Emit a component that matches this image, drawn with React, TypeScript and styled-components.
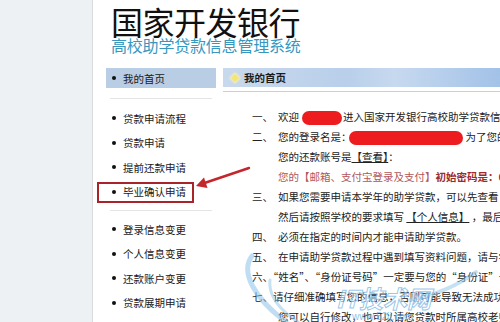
import React from "react"
import styled, {createGlobalStyle} from "styled-components"

const GlobalStyle = createGlobalStyle`
  html, body {
    margin: 0;
    padding: 0;
    background: #ffffff;
  }
  body {
    font-family: "Noto Sans CJK SC", "Liberation Sans", sans-serif;
    color: #222;
  }
`

const Page = styled.div`
  position: relative;
  display: flex;
  width: 500px;
  height: 322px;
  overflow: hidden;
`

const Gutter = styled.div`
  width: 92px;
  flex-shrink: 0;
  background-color: #eef1f3;
  border-right: 1px solid #d8dcdf;
`

const Main = styled.div`
  flex: 1;
  min-width: 0;
  display: flex;
  flex-direction: column;
  background: #fff;
`

const Brand = styled.div`
  padding: 5px 0 0 18px;
`

const Title = styled.div`
  font-size: 32px;
  line-height: 32px;
  color: #111;
  letter-spacing: -0.5px;
`

const Subtitle = styled.div`
  font-size: 16px;
  line-height: 16px;
  color: #3797bf;
  letter-spacing: -0.2px;
`

const Body = styled.div`
  position: relative;
  display: flex;
  margin-top: 15px;
`

const Sidebar = styled.div`
  width: 130px;
  flex-shrink: 0;
  font-size: 10.5px;
  color: #1a1a1a;
`

const HomeItem = styled.div`
  margin-left: 13px;
  width: 110px;
  height: 20px;
  display: flex;
  align-items: center;
  padding-left: 6px;
  box-sizing: border-box;
  background-color: #b9cde5;
`

const Dot = styled.span`
  width: 4px;
  height: 4px;
  border-radius: 50%;
  background: #111;
  margin-right: 7px;
  flex-shrink: 0;
`

const Separator = styled.div<{gap: number}>`
  margin: ${p => p.gap}px 0 0 17px;
  width: 102px;
  height: 1px;
  background: #e2e4e6;
`

const MenuList = styled.div<{top: number}>`
  margin-top: ${p => p.top}px;
`

const MenuItem = styled.div<{marked?: boolean}>`
  position: relative;
  height: 24.5px;
  display: flex;
  align-items: center;
  padding-left: 19px;
  ${p => p.marked && `
    &::after {
      content: "";
      position: absolute;
      left: 4px;
      top: 2px;
      width: 97px;
      height: 21px;
      box-sizing: border-box;
      border: 2px solid #a8232a;
    }
  `}
`

const Arrow = styled.svg`
  position: absolute;
  left: 100px;
  top: 95px;
  width: 60px;
  height: 30px;
`

const Content = styled.div`
  flex: 1;
  min-width: 0;
  overflow: hidden;
`

const ContentHead = styled.div`
  padding-bottom: 4px;
  border-bottom: 1px solid #cfcfcf;
`

const HeadBar = styled.div`
  height: 19px;
  display: flex;
  align-items: center;
  padding-left: 7px;
  background: linear-gradient(to right, #c9d9ed 0%, #b9cfea 45%, #c7d9ef 62%, #a2c2e7 100%);
  font-size: 10.5px;
  font-weight: bold;
  color: #1a1a1a;
`

const Diamond = styled.span`
  width: 6px;
  height: 6px;
  margin: 0 6px 0 2px;
  transform: rotate(45deg);
  background: #f3e57a;
  box-shadow: 0 0 2px 1px #f8f1b8;
`

const Notes = styled.div`
  padding: 15px 0 0 29px;
  font-size: 10.5px;
  line-height: 20px;
  color: #222;
  white-space: nowrap;
`

const Line = styled.div<{indent?: boolean; tone?: "red"}>`
  padding-left: ${p => (p.indent ? 26 : 0)}px;
  color: ${p => (p.tone === "red" ? "#b0565a" : "inherit")};
`

const Num = styled.span`
  display: inline-block;
  width: 26px;
`

const Strong = styled.b`
  color: #9e2a2c;
`

const Link = styled.span`
  text-decoration: underline;
`

const Blob = styled.span<{w: number; before: number; after: number}>`
  display: inline-block;
  width: ${p => p.w}px;
  height: 14px;
  margin: 0 ${p => p.after}px 0 ${p => p.before}px;
  vertical-align: middle;
  border-radius: 7px;
  background: #ec1c1f;
  filter: blur(0.6px);
`

const Watermark = styled.svg`
  position: absolute;
  left: 240px;
  top: 250px;
  width: 240px;
  height: 72px;
  pointer-events: none;
`

const menuTop = ["贷款申请流程", "贷款申请", "提前还款申请", "毕业确认申请"]
const menuBottom = ["登录信息变更", "个人信息变更", "还款账户变更", "贷款展期申请"]

function App() {
  return (
    <>
      <GlobalStyle />
      <Page>
        <Gutter />
        <Main>
          <Brand>
            <Title>国家开发银行</Title>
            <Subtitle>高校助学贷款信息管理系统</Subtitle>
          </Brand>
          <Body>
            <Sidebar>
              <HomeItem><Dot />我的首页</HomeItem>
              <Separator gap={10} />
              <MenuList top={7}>
                {menuTop.map(item => (
                  <MenuItem key={item} marked={item === "毕业确认申请"}><Dot />{item}</MenuItem>
                ))}
              </MenuList>
              <Separator gap={6} />
              <MenuList top={6}>
                {menuBottom.map(item => (
                  <MenuItem key={item}><Dot />{item}</MenuItem>
                ))}
              </MenuList>
            </Sidebar>
            <Arrow viewBox="0 0 60 30">
              <line x1="10" y1="20.5" x2="56" y2="5" stroke="#c3262c" strokeWidth="2.4" strokeLinecap="round" />
              <polygon points="3,23 14.5,25 11,14.5" fill="#c3262c" />
            </Arrow>
            <Content>
              <ContentHead>
                <HeadBar><Diamond />我的首页</HeadBar>
              </ContentHead>
              <Notes>
                <Line><Num>一、</Num>欢迎<Blob w={40} before={3} after={1} />进入国家开发银行高校助学贷款信息管理系统</Line>
                <Line><Num>二、</Num>您的登录名是：<Blob w={114} before={-3} after={3} />为了您的账户安全</Line>
                <Line indent>您的还款账号是<Link>【查看】</Link>：</Line>
                <Line indent tone="red">您的【邮箱、支付宝登录及支付】<Strong>初始密码是：654321</Strong></Line>
                <Line><Num>三、</Num>如果您需要申请本学年的助学贷款，可以先查看 <Link>【贷款申请流程】</Link></Line>
                <Line indent>然后请按照学校的要求填写 <Link>【个人信息】</Link> ，最后提交贷款申请</Line>
                <Line><Num>四、</Num>必须在指定的时间内才能申请助学贷款。</Line>
                <Line><Num>五、</Num>在申请助学贷款过程中遇到填写资料问题，请与学校联系</Line>
                <Line>六、“姓名”、“身份证号码”一定要与您的“身份证”一致</Line>
                <Line>七、请仔细准确填写您的信息，否则可能导致无法成功申请</Line>
                <Line indent>您可以自行修改，也可以请您贷款时所属高校老师帮助修改</Line>
              </Notes>
            </Content>
          </Body>
        </Main>
        <Watermark viewBox="0 0 240 72">
          <path d="M12 6 C 0 22, 14 48, 46 72" fill="none" stroke="#8cc3ea" strokeWidth="5" strokeOpacity="0.55" strokeLinecap="round" />
          <path d="M30 30 C 28 46, 40 60, 58 72" fill="none" stroke="#8cc3ea" strokeWidth="3" strokeOpacity="0.5" strokeLinecap="round" />
          <path d="M236 22 C 220 34, 200 44, 170 50" fill="none" stroke="#8cc3ea" strokeWidth="4" strokeOpacity="0.5" strokeLinecap="round" />
          <text x="96" y="58" fontFamily="'Noto Sans CJK SC', sans-serif" fontSize="24" fontWeight="bold" fontStyle="italic" fill="#ffffff" fillOpacity="0.55" stroke="#6aaee0" strokeOpacity="0.7" strokeWidth="1">IT技术网</text>
          <text x="112" y="70" fontFamily="'Liberation Sans', sans-serif" fontSize="10" fill="#72b4e2" fillOpacity="0.8">www.52ij.com</text>
        </Watermark>
      </Page>
    </>
  )
}

export default App
